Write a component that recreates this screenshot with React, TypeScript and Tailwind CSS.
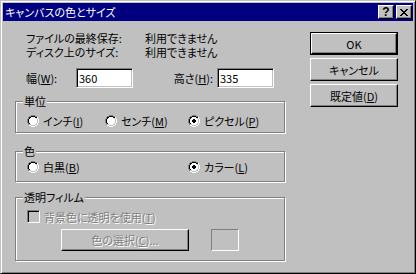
import React from "react";

const RADIO = [
  "....GGGG....",
  "..GGKKKKGG..",
  ".GKKWWWWKKW.",
  ".GKWWWWWWLW.",
  "GKWWWWWWWWLW",
  "GKWWWWWWWWLW",
  "GKWWWWWWWWLW",
  "GKWWWWWWWWLW",
  ".GKWWWWWWLW.",
  ".GLLWWWWLLW.",
  "..WWLLLLWW..",
  "....WWWW....",
];
const COLORS: Record<string, string> = { G: "#808080", K: "#000000", W: "#ffffff", L: "#c0c0c0" };

function Radio({ checked }: { checked?: boolean }) {
  const rects: React.ReactElement[] = [];
  RADIO.forEach((row, y) =>
    row.split("").forEach((c, x) => {
      if (c !== ".") rects.push(<rect key={`${x}-${y}`} x={x} y={y} width={1} height={1} fill={COLORS[c]} />);
    })
  );
  if (checked) {
    const d = [".KK.", "KKKK", "KKKK", ".KK."];
    d.forEach((row, y) =>
      row.split("").forEach((c, x) => {
        if (c === "K") rects.push(<rect key={`d${x}-${y}`} x={x + 4} y={y + 4} width={1} height={1} fill="#000" />);
      })
    );
  }
  return (
    <svg width="12" height="12" viewBox="0 0 12 12" shapeRendering="crispEdges" className="shrink-0">
      {rects}
    </svg>
  );
}

function CloseGlyph() {
  const rows = ["KK....KK", ".KK..KK.", "..KKKK..", "...KK...", "..KKKK..", ".KK..KK.", "KK....KK"];
  const rects: React.ReactElement[] = [];
  rows.forEach((row, y) =>
    row.split("").forEach((c, x) => {
      if (c === "K") rects.push(<rect key={`${x}-${y}`} x={x} y={y} width={1} height={1} fill="#000" />);
    })
  );
  return (
    <svg width="8" height="7" viewBox="0 0 8 7" shapeRendering="crispEdges">
      {rects}
    </svg>
  );
}

function U({ children }: { children: React.ReactNode }) {
  return <span className="underline decoration-1 underline-offset-[1px]">{children}</span>;
}

function Group({
  label,
  className,
  children,
}: {
  label: string;
  className: string;
  children: React.ReactNode;
}) {
  return (
    <div
      className={`relative w-[270px] border border-[#808080] shadow-[inset_1px_1px_0_#fff,1px_1px_0_#fff] ${className}`}
    >
      <div className="absolute left-[7px] top-[-7px] bg-[#c0c0c0] px-[1px] leading-[12px]">{label}</div>
      {children}
    </div>
  );
}

function RadioItem({ label, checked, w }: { label: React.ReactNode; checked?: boolean; w: string }) {
  return (
    <div className={`flex items-center gap-[4px] ${w}`}>
      <Radio checked={checked} />
      <span className="leading-[12px] whitespace-nowrap">{label}</span>
    </div>
  );
}

function Button({ children, def }: { children: React.ReactNode; def?: boolean }) {
  const inner = (
    <div className="flex h-full w-full items-center justify-center border border-t-white border-l-white border-r-black border-b-black shadow-[inset_-1px_-1px_0_#808080] leading-[12px]">
      {children}
    </div>
  );
  if (def) return <div className="h-[23px] w-[88px] border border-black">{inner}</div>;
  return <div className="h-[23px] w-[88px]">{inner}</div>;
}

function Input({ value }: { value: string }) {
  return (
    <div className="flex h-[20px] w-[57px] items-center border border-t-[#808080] border-l-[#808080] border-r-white border-b-white bg-white pl-[2px] shadow-[inset_1px_1px_0_#000,inset_-1px_-1px_0_#c0c0c0] leading-[12px]">
      {value}
    </div>
  );
}

export default function App() {
  return (
    <div className="h-[274px] w-[416px] bg-[#c0c0c0] font-['Noto_Sans_CJK_JP',sans-serif] text-[11px] leading-[12px] text-black [font-feature-settings:'palt']">
      <div className="flex h-full w-full flex-col border border-t-[#c0c0c0] border-l-[#c0c0c0] border-r-black border-b-black p-[2px] shadow-[inset_1px_1px_0_#fff,inset_-1px_-1px_0_#808080]">
        {/* title bar */}
        <div className="flex h-[18px] shrink-0 items-center bg-[#000080] pl-[2px] pr-[1px]">
          <span className="flex-1 text-white">キャンバスの色とサイズ</span>
          <div className="flex gap-[2px]">
            <div className="flex h-[14px] w-[16px] items-center justify-center border border-t-white border-l-white border-r-black border-b-black bg-[#c0c0c0] shadow-[inset_-1px_-1px_0_#808080]">
              <span className="font-['Liberation_Sans',sans-serif] text-[12px] font-bold leading-[11px]">?</span>
            </div>
            <div className="flex h-[14px] w-[16px] items-center justify-center border border-t-white border-l-white border-r-black border-b-black bg-[#c0c0c0] shadow-[inset_-1px_-1px_0_#808080]">
              <CloseGlyph />
            </div>
          </div>
        </div>

        {/* body */}
        <div className="flex">
          <div className="ml-[12px] flex w-[270px] flex-col">
            <div className="mt-[10px] grid grid-cols-[119px_auto] pl-[11px] leading-[14px]">
              <span>ファイルの最終保存:</span>
              <span>利用できません</span>
              <span>ディスク上のサイズ:</span>
              <span>利用できません</span>
            </div>
            <div className="mt-[9px] flex h-[20px] items-center pl-[11px]">
              <span className="w-[50px] whitespace-nowrap">
                幅(<U>W</U>):
              </span>
              <Input value="360" />
              <span className="flex w-[84px] justify-end whitespace-nowrap pr-[4px]">
                <span>
                  高さ(<U>H</U>):
                </span>
              </span>
              <Input value="335" />
            </div>

            <Group label="単位" className="mt-[13px] h-[32px] pl-[11px] pt-[13px]">
              <div className="flex">
                <RadioItem w="w-[78px]" label={<>インチ(<U>I</U>)</>} />
                <RadioItem w="w-[83px]" label={<>センチ(<U>M</U>)</>} />
                <RadioItem checked w="w-[80px]" label={<>ピクセル(<U>P</U>)</>} />
              </div>
            </Group>

            <Group label="色" className="mt-[18px] h-[31px] pl-[11px] pt-[9px]">
              <div className="flex">
                <RadioItem w="w-[161px]" label={<>白黒(<U>B</U>)</>} />
                <RadioItem checked w="w-[80px]" label={<>カラー(<U>L</U>)</>} />
              </div>
            </Group>

            <Group label="透明フィルム" className="mt-[15px] h-[64px] pl-[11px] pt-[12px]">
              <div className="flex items-center gap-[4px]">
                <div className="h-[13px] w-[13px] border border-t-[#808080] border-l-[#808080] border-r-white border-b-white bg-[#c0c0c0] shadow-[inset_1px_1px_0_#000,inset_-1px_-1px_0_#c0c0c0]" />
                <span className="text-[#808080] [text-shadow:1px_1px_0_#fff]">
                  背景色に透明を使用(<U>T</U>)
                </span>
              </div>
              <div className="mt-[6px] flex pl-[34px]">
                <div className="h-[22px] w-[128px]">
                  <div className="flex h-full w-full items-center justify-center border border-t-white border-l-white border-r-black border-b-black shadow-[inset_-1px_-1px_0_#808080] text-[#808080] [text-shadow:1px_1px_0_#fff]">
                    色の選択(<U>C</U>)...
                  </div>
                </div>
                <div className="ml-[22px] h-[22px] w-[28px] border border-t-[#808080] border-l-[#808080] border-r-white border-b-white" />
              </div>
            </Group>
          </div>

          <div className="ml-[25px] mt-[11px] flex flex-col gap-[3px]">
            <Button def>OK</Button>
            <Button>キャンセル</Button>
            <Button>
              既定値(<U>D</U>)
            </Button>
          </div>
        </div>
      </div>
    </div>
  );
}
